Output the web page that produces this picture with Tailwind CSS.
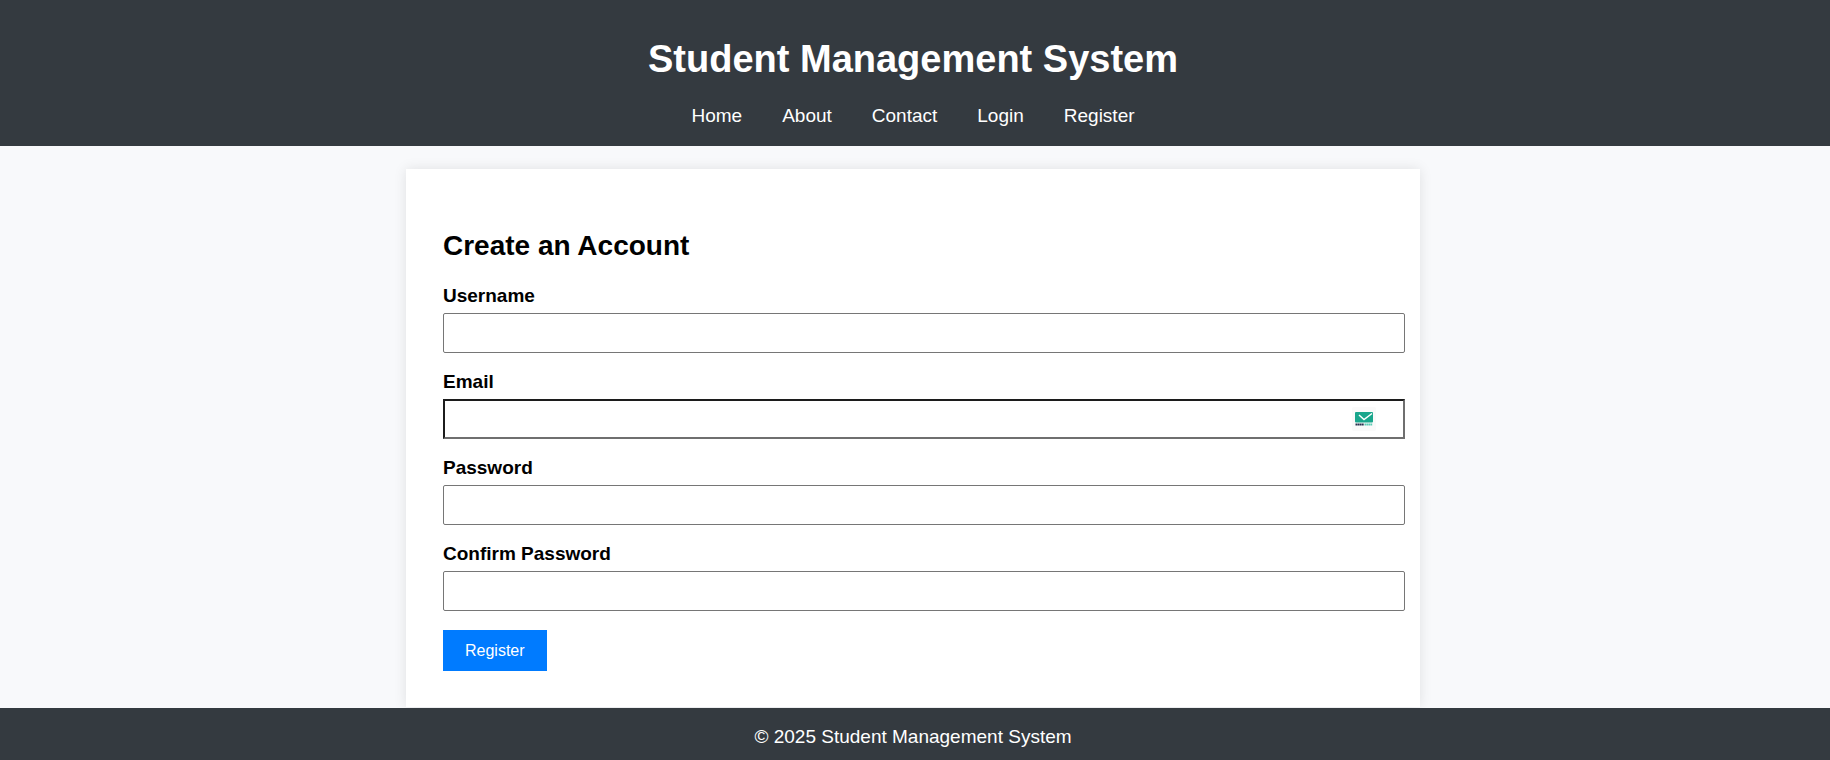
<!DOCTYPE html>
<html lang="en">
<head>
<meta charset="utf-8">
<meta name="viewport" content="width=device-width, initial-scale=1">
<title>Student Management System</title>
<script src="https://cdn.jsdelivr.net/npm/@tailwindcss/browser@4"></script>
</head>
<body class="flex min-h-screen flex-col bg-[#f8f9fb] font-['Liberation_Sans',Arial,sans-serif] text-[19px] leading-[22px] text-black">
  <header class="bg-[#343a40] pt-[37px] pr-1 pb-[19px] text-center text-white">
    <h1 class="text-[38px] leading-[44px] font-bold">Student Management System</h1>
    <nav class="mt-6 flex flex-wrap justify-center gap-10">
      <a href="#">Home</a>
      <a href="#">About</a>
      <a href="#">Contact</a>
      <a href="#">Login</a>
      <a href="#">Register</a>
    </nav>
  </header>
  <div class="grow pt-[23px] pr-1">
    <main class="mx-auto h-full max-w-[1014px] bg-white pt-[61px] pr-[15px] pb-9 pl-[37px] shadow-[0_0_12px_rgba(0,0,0,0.1)]">
      <h2 class="text-[28px] leading-8 font-bold">Create an Account</h2>
      <form class="mt-[23px]">
        <label for="username" class="block font-bold">Username</label>
        <input id="username" type="text" class="mt-[6px] mb-[18px] block h-10 w-full rounded-[2px] border border-[#767676] bg-white px-2">
        <label for="email" class="block font-bold">Email</label>
        <div class="relative mt-[6px] mb-[18px]">
          <input id="email" type="email" class="block h-10 w-full border-2 border-t-[#1c1c1c] border-r-[#6f6f6f] border-b-[#6f6f6f] border-l-[#1c1c1c] bg-white pr-14 pl-2">
          <svg class="absolute top-2 right-[29px] size-6" viewBox="0 0 24 24" aria-hidden="true">
            <rect width="24" height="24" rx="2" fill="#fafafa"/>
            <rect x="3" y="5" width="18" height="10.500" rx="1" fill="#1aa68c"/>
            <path d="M7 8l5 4.500 8-6" fill="none" stroke="#fff" stroke-width="1.500"/>
            <path d="M3.500 17.500h8.500" stroke="#26324f" stroke-width="2.200" stroke-dasharray="1.700 .3"/>
            <path d="M12.500 17.500h8" stroke="#5cc9b3" stroke-width="2.200" stroke-dasharray="1.700 .3"/>
          </svg>
        </div>
        <label for="password" class="block font-bold">Password</label>
        <input id="password" type="password" class="mt-[6px] mb-[18px] block h-10 w-full rounded-[2px] border border-[#767676] bg-white px-2">
        <label for="confirm" class="block font-bold">Confirm Password</label>
        <input id="confirm" type="password" class="mt-[6px] mb-[19px] block h-10 w-full rounded-[2px] border border-[#767676] bg-white px-2">
        <button type="submit" class="bg-[#007bff] px-[22px] py-[11px] text-base leading-[19px] text-white">Register</button>
      </form>
    </main>
  </div>
  <footer class="relative bg-[#343a40] pt-[18px] pr-1 pb-3 text-center text-white">
    <p>© 2025 Student Management System</p>
  </footer>
</body>
</html>
